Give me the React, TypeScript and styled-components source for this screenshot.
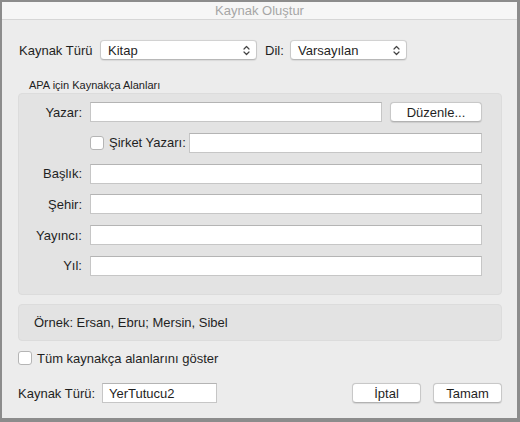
import React from "react";
import styled, { createGlobalStyle } from "styled-components";

const Global = createGlobalStyle`
  html, body { margin: 0; padding: 0; background: #ececec; }
  body { font-family: "Liberation Sans", Arial, sans-serif; font-size: 13px; color: #1f1f1f; }
  * { box-sizing: border-box; }
`;

const Window = styled.div`
  width: 520px;
  height: 422px;
  background: #ececec;
  border-style: solid;
  border-color: #8c8c8c;
  border-width: 2px 3px 4px 2px;
  display: flex;
  flex-direction: column;
`;

const TitleBar = styled.div`
  height: 18px;
  background: #f6f6f6;
  border-bottom: 1px solid #d6d6d6;
  display: flex;
  align-items: center;
  justify-content: center;
  color: #a6a6a6;
  font-size: 13px;
  line-height: 17px;
`;

const Body = styled.div`
  flex: 1;
  display: flex;
  flex-direction: column;
  padding: 20px 15px 0 16px;
`;

const TopRow = styled.div`
  display: flex;
  align-items: center;
  height: 20px;
  padding-left: 1px;
`;

const Label = styled.span<{ $w?: number; $ml?: number }>`
  display: inline-block;
  width: ${(p) => (p.$w ? `${p.$w}px` : "auto")};
  margin-left: ${(p) => p.$ml ?? 0}px;
  white-space: nowrap;
`;

const SelectBox = styled.div<{ $w: number }>`
  width: ${(p) => p.$w}px;
  height: 20px;
  background: #fff;
  border: 1px solid #c9c9c9;
  border-top-color: #d2d2d2;
  border-bottom-color: #b8b8b8;
  border-radius: 4px;
  display: flex;
  align-items: center;
  justify-content: space-between;
  padding: 0 6px 0 7px;
  box-shadow: 0 0.5px 1px rgba(0, 0, 0, 0.08);
`;

const Chevron = () => (
  <svg width="7" height="11" viewBox="0 0 7 11">
    <path d="M1 4 L3.5 1.5 L6 4 M1 7 L3.5 9.5 L6 7" fill="none" stroke="#444" strokeWidth="1.2" strokeLinecap="round" strokeLinejoin="round" />
  </svg>
);

const GroupTitle = styled.div`
  font-size: 11px;
  line-height: 13px;
  margin: 19px 0 1px 11px;
  color: #222;
`;

const GroupBox = styled.div`
  height: 202px;
  background: #e3e3e3;
  border: 1px solid #dcdcdc;
  border-radius: 4px;
  padding: 8px 19px 0 0;
  display: flex;
  flex-direction: column;
  gap: 10.8px;
`;

const FieldRow = styled.div`
  display: grid;
  grid-template-columns: 71px 1fr;
  align-items: center;
  height: 20px;
`;

const FieldLabel = styled.span`
  text-align: right;
  padding-right: 8px;
  white-space: nowrap;
`;

const FieldContent = styled.div`
  display: flex;
  align-items: center;
  gap: 8px;
  height: 20px;
`;

const TextInput = styled.div<{ $w?: number }>`
  height: 20px;
  ${(p) => (p.$w ? `width: ${p.$w}px; flex: none;` : "flex: 1;")}
  min-width: 0;
  background: #fff;
  border: 1px solid #c6c6c6;
  border-top-color: #b4b4b4;
  padding: 0 6px;
  display: flex;
  align-items: center;
`;

const Button = styled.div<{ $w: number; $ml?: number }>`
  width: ${(p) => p.$w}px;
  margin-left: ${(p) => p.$ml ?? 0}px;
  height: 20px;
  background: #fff;
  border: 1px solid #c8c8c8;
  border-bottom-color: #b2b2b2;
  border-radius: 4px;
  box-shadow: 0 0.5px 1px rgba(0, 0, 0, 0.1);
  display: flex;
  align-items: center;
  justify-content: center;
`;

const CheckBox = styled.span`
  width: 14px;
  height: 14px;
  background: #fff;
  border: 1px solid #b5b5b5;
  border-radius: 3px;
  flex: none;
`;

const CheckLabel = styled.label<{ $w?: number }>`
  display: flex;
  align-items: center;
  gap: 5px;
  white-space: nowrap;
  ${(p) => (p.$w ? `width: ${p.$w}px; flex: none;` : "")}
`;

const SampleBox = styled.div`
  margin-top: 9px;
  height: 37px;
  background: #e3e3e3;
  border: 1px solid #dcdcdc;
  border-radius: 4px;
  display: flex;
  align-items: center;
  padding-left: 15px;
`;

const ShowAllRow = styled.div`
  margin-top: 10px;
  height: 14px;
  display: flex;
  align-items: center;
`;

const BottomRow = styled.div`
  margin-top: 18px;
  height: 20px;
  display: flex;
  align-items: center;
`;

const Spacer = styled.div`
  flex: 1;
`;

export default function App() {
  return (
    <>
      <Global />
      <Window>
        <TitleBar>Kaynak Oluştur</TitleBar>
        <Body>
          <TopRow>
            <Label $w={81}>Kaynak Türü</Label>
            <SelectBox $w={157}>
              <span>Kitap</span>
              <Chevron />
            </SelectBox>
            <Label $ml={8} $w={25}>Dil:</Label>
            <SelectBox $w={117}>
              <span>Varsayılan</span>
              <Chevron />
            </SelectBox>
          </TopRow>
          <GroupTitle>APA için Kaynakça Alanları</GroupTitle>
          <GroupBox>
            <FieldRow>
              <FieldLabel>Yazar:</FieldLabel>
              <FieldContent>
                <TextInput />
                <Button $w={92}>Düzenle...</Button>
              </FieldContent>
            </FieldRow>
            <FieldRow>
              <span />
              <FieldContent>
                <CheckLabel $w={91}>
                  <CheckBox />
                  Şirket Yazarı:
                </CheckLabel>
                <TextInput />
              </FieldContent>
            </FieldRow>
            <FieldRow>
              <FieldLabel>Başlık:</FieldLabel>
              <FieldContent>
                <TextInput />
              </FieldContent>
            </FieldRow>
            <FieldRow>
              <FieldLabel>Şehir:</FieldLabel>
              <FieldContent>
                <TextInput />
              </FieldContent>
            </FieldRow>
            <FieldRow>
              <FieldLabel>Yayıncı:</FieldLabel>
              <FieldContent>
                <TextInput />
              </FieldContent>
            </FieldRow>
            <FieldRow>
              <FieldLabel>Yıl:</FieldLabel>
              <FieldContent>
                <TextInput />
              </FieldContent>
            </FieldRow>
          </GroupBox>
          <SampleBox>Örnek: Ersan, Ebru; Mersin, Sibel</SampleBox>
          <ShowAllRow>
            <CheckLabel>
              <CheckBox />
              Tüm kaynakça alanlarını göster
            </CheckLabel>
          </ShowAllRow>
          <BottomRow>
            <Label $w={84}>Kaynak Türü:</Label>
            <TextInput $w={115}>YerTutucu2</TextInput>
            <Spacer />
            <Button $w={69}>İptal</Button>
            <Button $w={69} $ml={12}>Tamam</Button>
          </BottomRow>
        </Body>
      </Window>
    </>
  );
}
